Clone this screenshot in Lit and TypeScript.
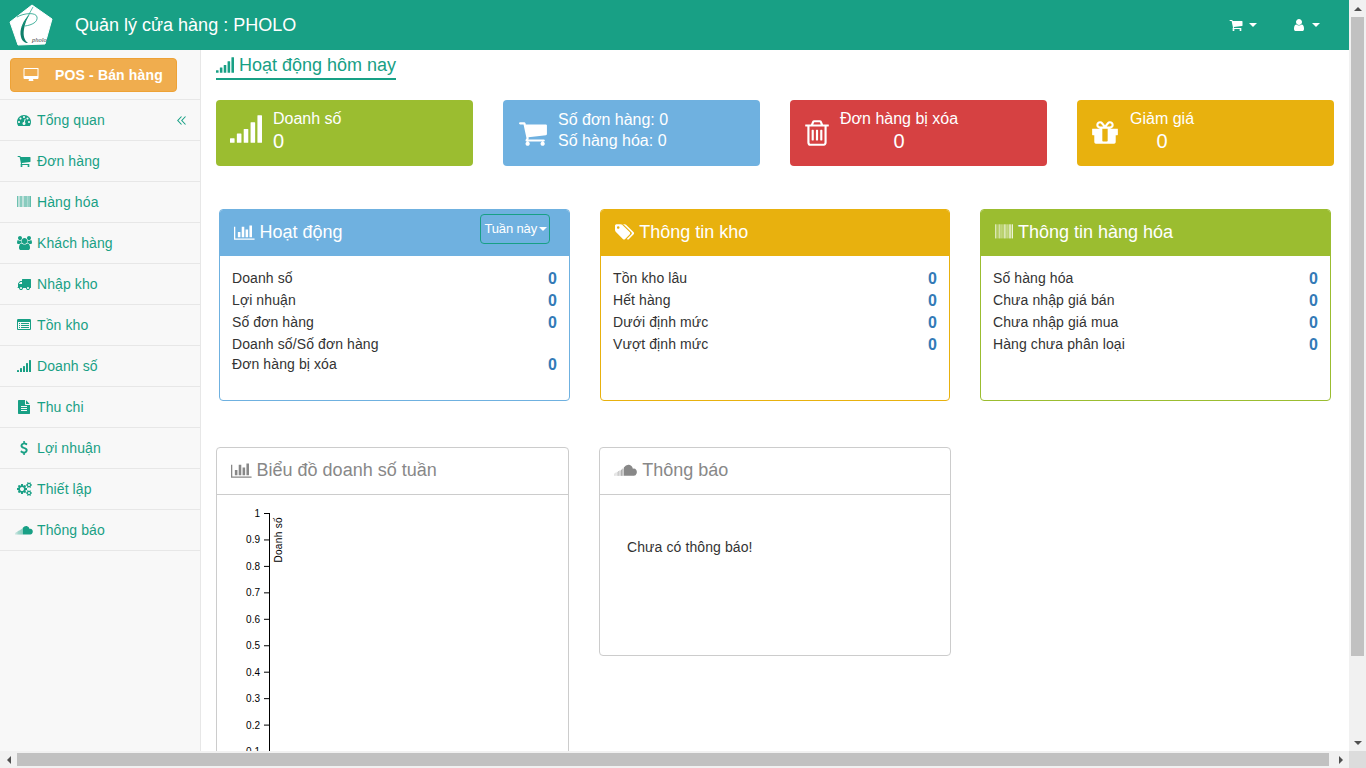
import { LitElement, html, css, svg } from 'lit';
import { customElement } from 'lit/decorators.js';

type IconDef = { w: number; body: ReturnType<typeof svg> };

const p = (d: string) => svg`<path d=${d}></path>`;

const barcodeBody = () => {
  const bars = [[0, 63], [94, 32], [190, 31], [317, 31], [443, 63], [570, 63], [696, 31], [823, 31], [918, 63], [1045, 63], [1171, 63], [1298, 31], [1393, 63], [1520, 63], [1647, 31], [1711, 81]];
  return svg`${bars.map(([x, w]) => svg`<rect x=${x} y="128" width=${w} height="1408"></rect>`)}`;
};

const signalBody = () => {
  const bars = [[0, 1408], [384, 1152], [768, 896], [1152, 512], [1536, 128]];
  return svg`${bars.map(([x, y]) => svg`<rect x=${x} y=${y} width="256" height=${1664 - y} rx="30"></rect>`)}`;
};

const icons: Record<string, IconDef> = {
  cart: { w: 1792, body: p('M704 1536q0 52-38 90t-90 38-90-38-38-90 38-90 90-38 90 38 38 90zm896 0q0 52-38 90t-90 38-90-38-38-90 38-90 90-38 90 38 38 90zm128-1088v512q0 24-16.5 42.5t-40.5 21.5l-1044 122q13 60 13 70 0 16-24 64h920q26 0 45 19t19 45-19 45-45 19h-1024q-26 0-45-19t-19-45q0-11 8-31.5t16-36 21.5-40 15.5-29.5l-177-823h-204q-26 0-45-19t-19-45 19-45 45-19h256q16 0 28.5 6.5t19.5 15.5 13 24.5 8 26 5.5 29.5 4.5 26h1201q26 0 45 19t19 45z') },
  user: { w: 1792, body: p('M1536 1399q0 109-62.5 187t-150.5 78h-854q-88 0-150.5-78t-62.5-187q0-85 8.5-160.5t31.5-152 58.5-131 94-89 134.5-34.5q131 128 313 128t313-128q76 0 134.5 34.5t94 89 58.5 131 31.5 152 8.5 160.5zm-256-887q0 159-112.5 271.5t-271.5 112.5-271.5-112.5-112.5-271.5 112.5-271.5 271.5-112.5 271.5 112.5 112.5 271.5z') },
  desktop: { w: 2048, body: p('M1856 992v-832q0-13-9.5-22.5t-22.5-9.5h-1600q-13 0-22.5 9.5t-9.5 22.5v832q0 13 9.5 22.5t22.5 9.5h1600q13 0 22.5-9.5t9.5-22.5zm128-832v1088q0 66-47 113t-113 47h-544q0 37 16 77.5t32 71 16 43.5q0 26-19 45t-45 19h-512q-26 0-45-19t-19-45q0-14 16-44t32-70 16-78h-544q-66 0-113-47t-47-113v-1088q0-66 47-113t113-47h1632q66 0 113 47t47 113z') },
  gauge: { w: 1792, body: p('M384 1152q0-53-37.5-90.5t-90.5-37.5-90.5 37.5-37.5 90.5 37.5 90.5 90.5 37.5 90.5-37.5 37.5-90.5zm192-448q0-53-37.5-90.5t-90.5-37.5-90.5 37.5-37.5 90.5 37.5 90.5 90.5 37.5 90.5-37.5 37.5-90.5zm428 481l101-382q6-26-7.5-48.5t-38.5-29.5-48 6.5-30 39.5l-101 382q-60 5-107 43.5t-63 98.5q-20 77 20 146t117 89 146-20 89-117q16-60-6-117t-72-91zm660-33q0-53-37.5-90.5t-90.5-37.5-90.5 37.5-37.5 90.5 37.5 90.5 90.5 37.5 90.5-37.5 37.5-90.5zm-640-640q0-53-37.5-90.5t-90.5-37.5-90.5 37.5-37.5 90.5 37.5 90.5 90.5 37.5 90.5-37.5 37.5-90.5zm448 192q0-53-37.5-90.5t-90.5-37.5-90.5 37.5-37.5 90.5 37.5 90.5 90.5 37.5 90.5-37.5 37.5-90.5zm320 448q0 261-141 483-19 29-54 29h-1402q-35 0-54-29-141-221-141-483 0-182 71-348t191-286 286-191 348-71 348 71 286 191 191 286 71 348z') },
  barcode: { w: 1792, body: barcodeBody() },
  users: { w: 1920, body: p('M593 896q-162 5-265 128h-134q-82 0-138-40.5t-56-118.5q0-353 124-353 6 0 43.5 21t97.5 42.5 119 21.5q67 0 133-23-5 37-5 66 0 139 81 256zm1071 637q0 120-73 189.5t-194 69.5h-874q-121 0-194-69.5t-73-189.5q0-53 3.5-103.5t14-109 26.5-108.5 43-97.5 62-81 85.5-53.5 111.5-20q10 0 43 21.5t73 48 107 48 135 21.5 135-21.5 107-48 73-48 43-21.5q61 0 111.5 20t85.5 53.5 62 81 43 97.5 26.5 108.5 14 109 3.5 103.5zm-1024-1277q0 106-75 181t-181 75-181-75-75-181 75-181 181-75 181 75 75 181zm704 384q0 159-112.5 271.5t-271.5 112.5-271.5-112.5-112.5-271.5 112.5-271.5 271.5-112.5 271.5 112.5 112.5 271.5zm576 225q0 78-56 118.5t-138 40.5h-134q-103-123-265-128 81-117 81-256 0-29-5-66 66 23 133 23 59 0 119-21.5t97.5-42.5 43.5-21q124 0 124 353zm-128-609q0 106-75 181t-181 75-181-75-75-181 75-181 181-75 181 75 75 181z') },
  truck: { w: 1792, body: p('M640 1408q0-52-38-90t-90-38-90 38-38 90 38 90 90 38 90-38 38-90zm-384-512h384v-256h-158q-13 0-22 9l-195 195q-9 9-9 22v30zm1280 512q0-52-38-90t-90-38-90 38-38 90 38 90 90 38 90-38 38-90zm256-1088v1024q0 15-4 26.5t-13.5 18.5-16.5 11.5-23.5 6-22.5 2-25.5 0-22.5-.5q0 106-75 181t-181 75-181-75-75-181h-384q0 106-75 181t-181 75-181-75-75-181h-64q-3 0-22.5.5t-25.5 0-22.5-2-23.5-6-16.5-11.5-13.5-18.5-4-26.5q0-26 19-45t45-19v-320q0-8-.5-35t0-38 2.5-34.5 6.5-37 14-30.5 22.5-30l198-198q19-19 50.5-32t58.5-13h160v-192q0-26 19-45t45-19h1024q26 0 45 19t19 45z') },
  list: { w: 1792, body: p('M384 1184v64q0 13-9.5 22.5t-22.5 9.5h-64q-13 0-22.5-9.5t-9.5-22.5v-64q0-13 9.5-22.5t22.5-9.5h64q13 0 22.5 9.5t9.5 22.5zm0-256v64q0 13-9.5 22.5t-22.5 9.5h-64q-13 0-22.5-9.5t-9.5-22.5v-64q0-13 9.5-22.5t22.5-9.5h64q13 0 22.5 9.5t9.5 22.5zm0-256v64q0 13-9.5 22.5t-22.5 9.5h-64q-13 0-22.5-9.5t-9.5-22.5v-64q0-13 9.5-22.5t22.5-9.5h64q13 0 22.5 9.5t9.5 22.5zm1152 512v64q0 13-9.5 22.5t-22.5 9.5h-960q-13 0-22.5-9.5t-9.5-22.5v-64q0-13 9.5-22.5t22.5-9.5h960q13 0 22.5 9.5t9.5 22.5zm0-256v64q0 13-9.5 22.5t-22.5 9.5h-960q-13 0-22.5-9.5t-9.5-22.5v-64q0-13 9.5-22.5t22.5-9.5h960q13 0 22.5 9.5t9.5 22.5zm0-256v64q0 13-9.5 22.5t-22.5 9.5h-960q-13 0-22.5-9.5t-9.5-22.5v-64q0-13 9.5-22.5t22.5-9.5h960q13 0 22.5 9.5t9.5 22.5zm128 704v-832q0-13-9.5-22.5t-22.5-9.5h-1472q-13 0-22.5 9.5t-9.5 22.5v832q0 13 9.5 22.5t22.5 9.5h1472q13 0 22.5-9.5t9.5-22.5zm128-1088v1088q0 66-47 113t-113 47h-1472q-66 0-113-47t-47-113v-1088q0-66 47-113t113-47h1472q66 0 113 47t47 113z') },
  signal: { w: 1792, body: signalBody() },
  file: { w: 1792, body: p('M1596 476q14 14 28 36h-472v-472q22 14 36 28zm-476 164h544v1056q0 40-28 68t-68 28h-1344q-40 0-68-28t-28-68v-1600q0-40 28-68t68-28h800v544q0 40 28 68t68 28zm160 736v-64q0-14-9-23t-23-9h-704q-14 0-23 9t-9 23v64q0 14 9 23t23 9h704q14 0 23-9t9-23zm0-256v-64q0-14-9-23t-23-9h-704q-14 0-23 9t-9 23v64q0 14 9 23t23 9h704q14 0 23-9t9-23zm0-256v-64q0-14-9-23t-23-9h-704q-14 0-23 9t-9 23v64q0 14 9 23t23 9h704q14 0 23-9t9-23z') },
  dollar: { w: 1024, body: p('M978 1185q0 153-99.500 263.500t-258.500 136.500v175q0 14-9 23t-23 9h-135q-13 0-22.500-9.500t-9.500-22.500v-175q-66-9-127.500-31t-101.500-44.500-74-48-46.500-37.500-17.500-18q-17-21-2-41l103-135q7-10 23-12 15-2 24 9l2 2q113 99 243 125 37 8 74 8 81 0 142.500-43t61.500-122q0-28-15-53t-33.500-42-58.500-37.500-66-32-80-32.500q-39-16-61.500-25t-61.500-26.500-62.500-31-56.500-35.500-53.500-42.500-43.500-49-35.500-58-21-66.500-8.500-78q0-138 98-242t255-134v-180q0-13 9.500-22.500t22.500-9.500h135q14 0 23 9t9 23v176q57 6 110.500 23t87 33.500 63.500 37.500 39 29 15 14q17 18 5 38l-81 146q-8 15-23 16-14 3-27-7-3-3-14.500-12t-39-26.500-58.500-32-74.500-26-85.500-11.500q-95 0-155 43t-60 111q0 26 8.500 48t29.500 41.500 39.500 33 56 31 60.500 27 70 27.500q53 20 81 31.500t76 35 75.500 42.500 62 50 53 63.500 31.500 76.500 13 94z') },
  cogs: { w: 1920, body: p('M896 896q0-106-75-181t-181-75-181 75-75 181 75 181 181 75 181-75 75-181zm768 512q0-52-38-90t-90-38-90 38-38 90q0 53 37.500 90.500t90.500 37.500 90.500-37.500 37.500-90.500zm0-1024q0-52-38-90t-90-38-90 38-38 90q0 53 37.500 90.500t90.500 37.500 90.500-37.500 37.500-90.500zm-384 421v185q0 10-7 19.500t-16 10.500l-155 24q-11 35-32 76 34 48 90 115 7 11 7 20 0 12-7 19-23 30-82.500 89.500t-78.500 59.500q-11 0-21-7l-115-90q-37 19-77 31-11 108-23 155-7 24-30 24h-186q-11 0-20-7.500t-10-17.500l-23-153q-34-10-75-31l-118 89q-7 7-20 7-11 0-21-8-144-133-144-160 0-9 7-19 10-14 41-53t47-61q-23-44-35-82l-152-24q-10-1-17-9.500t-7-19.500v-185q0-10 7-19.500t16-10.500l155-24q11-35 32-76-34-48-90-115-7-11-7-20 0-12 7-20 22-30 82-89t79-59q11 0 21 7l115 90q34-18 77-32 11-108 23-154 7-24 30-24h186q11 0 20 7.500t10 17.500l23 153q34 10 75 31l118-89q8-7 20-7 11 0 21 8 144 133 144 160 0 8-7 19-12 16-42 54t-45 60q23 48 34 82l152 23q10 2 17 10.500t7 19.500zm640 533v140q0 16-149 31-12 27-30 52 51 113 51 138 0 4-4 7-122 71-124 71-8 0-46-47t-52-68q-20 2-30 2t-30-2q-14 21-52 68t-46 47q-2 0-124-71-4-3-4-7 0-25 51-138-18-25-30-52-149-15-149-31v-140q0-16 149-31 13-29 30-52-51-113-51-138 0-4 4-7 4-2 35-20t59-34 30-16q8 0 46 46.500t52 67.500q20-2 30-2t30 2q51-71 92-112l6-2q4 0 124 70 4 3 4 7 0 25-51 138 17 23 30 52 149 15 149 31zm0-1024v140q0 16-149 31-12 27-30 52 51 113 51 138 0 4-4 7-122 71-124 71-8 0-46-47t-52-68q-20 2-30 2t-30-2q-14 21-52 68t-46 47q-2 0-124-71-4-3-4-7 0-25 51-138-18-25-30-52-149-15-149-31v-140q0-16 149-31 13-29 30-52-51-113-51-138 0-4 4-7 4-2 35-20t59-34 30-16q8 0 46 46.500t52 67.500q20-2 30-2t30 2q51-71 92-112l6-2q4 0 124 70 4 3 4 7 0 25-51 138 17 23 30 52 149 15 149 31z') },
  cloud: {
    w: 2304,
    body: svg`
      <rect x="0" y="1240" width="90" height="240" opacity=".25"></rect>
      <rect x="140" y="1160" width="90" height="320" opacity=".35"></rect>
      <rect x="280" y="1080" width="90" height="400" opacity=".45"></rect>
      <rect x="420" y="1000" width="90" height="480" opacity=".55"></rect>
      <rect x="560" y="940" width="90" height="540" opacity=".65"></rect>
      <rect x="700" y="860" width="90" height="620" opacity=".75"></rect>
      <rect x="840" y="760" width="90" height="720" opacity=".85"></rect>
      <path d="M980 1480V640Q1200 340 1500 380 1780 420 1880 760 2080 700 2200 860 2320 1020 2250 1240 2180 1460 1980 1480Z"></path>`,
  },
  trash: { w: 1792, body: p('M704 736v576q0 14-9 23t-23 9h-64q-14 0-23-9t-9-23v-576q0-14 9-23t23-9h64q14 0 23 9t9 23zm256 0v576q0 14-9 23t-23 9h-64q-14 0-23-9t-9-23v-576q0-14 9-23t23-9h64q14 0 23 9t9 23zm256 0v576q0 14-9 23t-23 9h-64q-14 0-23-9t-9-23v-576q0-14 9-23t23-9h64q14 0 23 9t9 23zm128 724v-948h-896v948q0 22 7 40.500t14.500 27 10.500 8.500h832q3 0 10.500-8.500t14.500-27 7-40.500zm-672-1076h448l-48-117q-7-9-17-11h-317q-10 2-17 11zm928 32v64q0 14-9 23t-23 9h-96v948q0 83-47 143.500t-113 60.500h-832q-66 0-113-58.500t-47-141.500v-952h-96q-14 0-23-9t-9-23v-64q0-14 9-23t23-9h309l70-167q15-37 54-63t79-26h320q40 0 79 26t54 63l70 167h309q14 0 23 9t9 23z') },
  gift: { w: 1792, body: p('M1056 1356v-716h-320v716q0 25 18 38.500t46 13.500h192q28 0 46-13.500t18-38.500zm-456-844h195l-126-161q-26-31-69-31-40 0-68 28t-28 68 28 68 68 28zm688-96q0-40-28-68t-68-28q-43 0-69 31l-125 161h194q40 0 68-28t28-68zm376 256v320q0 14-9 23t-23 9h-96v416q0 40-28 68t-68 28h-1088q-40 0-68-28t-28-68v-416h-96q-14 0-23-9t-9-23v-320q0-14 9-23t23-9h440q-93 0-158.500-65.500t-65.500-158.500 65.500-158.500 158.500-65.500q107 0 168 77l128 165 128-165q61-77 168-77 93 0 158.500 65.500t65.500 158.500-65.500 158.500-158.500 65.500h440q14 0 23 9t9 23z') },
  tags: { w: 1920, body: p('M448 448q0-53-37.500-90.500t-90.500-37.500-90.500 37.500-37.500 90.500 37.500 90.500 90.500 37.500 90.500-37.500 37.500-90.500zm1067 576q0 53-37 90l-491 492q-39 37-91 37-53 0-90-37l-715-716q-38-37-64.500-101t-26.500-117v-416q0-52 38-90t90-38h416q53 0 117 26.500t102 64.500l715 714q37 39 37 91zm384 0q0 53-37 90l-491 492q-39 37-91 37-36 0-59-14t-53-45l470-470q37-37 37-90 0-52-37-91l-715-714q-38-38-102-64.500t-117-26.500h224q53 0 117 26.500t102 64.500l715 714q37 39 37 91z') },
  chart: { w: 2048, body: p('M640 896v512h-256v-512h256zm384-512v1024h-256v-1024h256zm1024 1152v128h-2048v-1280h128v1152h1920zm-640-896v768h-256v-768h256zm384-384v1152h-256v-1152h256z') },
};

const icon = (name: string, size: number) => {
  const def = icons[name];
  return html`<svg class="ic" viewBox="0 0 ${def.w} 1792" width=${(size * def.w) / 1792} height=${size} fill="currentColor">${def.body}</svg>`;
};

const menu = [
  ['gauge', 'Tổng quan'],
  ['cart', 'Đơn hàng'],
  ['barcode', 'Hàng hóa'],
  ['users', 'Khách hàng'],
  ['truck', 'Nhập kho'],
  ['list', 'Tồn kho'],
  ['signal', 'Doanh số'],
  ['file', 'Thu chi'],
  ['dollar', 'Lợi nhuận'],
  ['cogs', 'Thiết lập'],
  ['cloud', 'Thông báo'],
];

const panels = [
  {
    cls: 'blue', ic: 'chart', title: 'Hoạt động', btn: true,
    rows: [['Doanh số', '0'], ['Lợi nhuận', '0'], ['Số đơn hàng', '0'], ['Doanh số/Số đơn hàng', ''], ['Đơn hàng bị xóa', '0']],
  },
  {
    cls: 'yellow', ic: 'tags', title: 'Thông tin kho', btn: false,
    rows: [['Tồn kho lâu', '0'], ['Hết hàng', '0'], ['Dưới định mức', '0'], ['Vượt định mức', '0']],
  },
  {
    cls: 'green', ic: 'barcode', title: 'Thông tin hàng hóa', btn: false,
    rows: [['Số hàng hóa', '0'], ['Chưa nhập giá bán', '0'], ['Chưa nhập giá mua', '0'], ['Hàng chưa phân loại', '0']],
  },
];

const ticks = ['1', '0.9', '0.8', '0.7', '0.6', '0.5', '0.4', '0.3', '0.2', '0.1'];

@customElement('app-root')
export class AppRoot extends LitElement {
  static styles = css`
    :host {
      display: grid;
      grid-template-columns: 1349px 17px;
      grid-template-rows: 751px 17px;
      width: 1366px;
      height: 768px;
      overflow: hidden;
      font-family: 'Liberation Sans', Arial, sans-serif;
      font-size: 14px;
      line-height: 20px;
      color: #333;
      background: #fff;
    }
    .ic { display: block; flex: none; }
    .page { display: flex; flex-direction: column; overflow: hidden; }

    .topbar { display: flex; align-items: center; flex: none; height: 50px; background: #18a085; color: #fff; }
    .logo { display: block; margin-left: 8px; flex: none; }
    .brand { margin-left: 21px; font-size: 18px; }
    .tools { display: flex; align-items: center; margin-left: auto; padding-right: 29px; }
    .tool { display: flex; align-items: center; gap: 6px; margin-left: 35px; }
    .caret { width: 0; height: 0; border-left: 4.5px solid transparent; border-right: 4.5px solid transparent; border-top: 4.5px solid currentColor; }

    .body { display: flex; flex: 1; min-height: 0; }
    .side { flex: none; width: 200px; background: #f8f8f8; border-right: 1px solid #e7e7e7; color: #18a085; letter-spacing: .1px; }
    .pos-wrap { height: 50px; padding: 8px 0 0 10px; box-sizing: border-box; border-bottom: 1px solid #e7e7e7; }
    .pos {
      display: flex; align-items: center; box-sizing: border-box; width: 167px; height: 34px; padding-left: 12px;
      background: #f0ad4e; border: 1px solid #eea236; border-radius: 4px; color: #fff; font-weight: bold; letter-spacing: .15px;
    }
    .pos span { margin-left: 16px; }
    .item { display: flex; align-items: center; box-sizing: border-box; height: 41px; padding-left: 15px; border-bottom: 1px solid #e7e7e7; }
    .item .ibox { display: flex; justify-content: center; width: 18px; margin-right: 4px; }
    .collapse { margin-left: auto; margin-right: 14px; }

    .main { flex: 1; min-width: 0; padding: 5px 0 0 15px; overflow: hidden; }
    .title {
      display: inline-flex; align-items: center; gap: 5px; box-sizing: border-box; width: 180px; height: 25px;
      border-bottom: 2px solid #18a085; color: #18a085; font-size: 18px; padding-bottom: 4px; white-space: nowrap;
    }
    .stats { display: flex; gap: 30px; margin-top: 20px; }
    .stat { display: flex; align-items: center; box-sizing: border-box; width: 257px; height: 66px; border-radius: 4px; color: #fff; font-size: 16px; line-height: 21px; }
    .stat .val { font-size: 20px; line-height: 24px; }
    .centered { text-align: center; }
    .stat .txt { margin-top: -5px; }
    .stat .sig { margin-top: -9px; }
    .s1 { padding-left: 14px; gap: 11px; }
    .s2 { padding-left: 15px; gap: 10px; }
    .s2 .txt { margin-top: -7px; }
    .s3 { padding-left: 12px; gap: 8px; }
    .s4 { padding-left: 13px; gap: 10px; }

    .green { --c: #9bbd30; }
    .blue { --c: #6fb1e0; }
    .red { --c: #d64142; }
    .yellow { --c: #e8b10e; }
    .stat.green, .stat.blue, .stat.red, .stat.yellow { background: var(--c); }

    .panels { display: grid; grid-template-columns: 351px 350px 351px; gap: 30px; margin: 43px 0 0 3px; width: 1112px; }
    .panel { box-sizing: border-box; height: 192px; border: 1px solid var(--c); border-radius: 4px; overflow: hidden; }
    .phead { display: flex; align-items: center; box-sizing: border-box; height: 46px; padding: 0 19px 2px 14px; background: var(--c); color: #fff; font-size: 18px; gap: 5px; }
    .phead .ptitle { flex: 1; }
    .btn {
      display: flex; align-items: center; gap: 2px; align-self: flex-start; box-sizing: border-box; height: 30px; margin-top: 4px; padding: 0 2px 0 3px;
      border: 1px solid #18a085; border-radius: 4px; font-size: 13px; letter-spacing: -.15px;
    }
    .btn .caret { border-width: 4px 4px 0; }
    .pbody { padding: 11px 12px 0; letter-spacing: .1px; }
    .row { display: flex; justify-content: space-between; }
    .row b { color: #337ab7; font-size: 16px; line-height: 24px; margin-bottom: -2px; }
    .row span { line-height: 22px; }
    .row.short { height: 20px; }

    .lower { display: flex; gap: 30px; margin-top: 46px; align-items: flex-start; }
    .card { box-sizing: border-box; border: 1px solid #ccc; border-radius: 4px; }
    .chart-card { width: 353px; height: 420px; }
    .note-card { width: 352px; height: 209px; }
    .chead { display: flex; align-items: center; gap: 5px; box-sizing: border-box; height: 47px; padding: 0 0 2px 14px; border-bottom: 1px solid #ccc; color: #888; font-size: 18px; }
    .note { padding: 42px 0 0 27px; letter-spacing: .1px; }
    .plot { display: block; }
    .plot text { font-family: 'Liberation Sans', Arial, sans-serif; font-size: 10px; fill: #000; }
    .plot .axis-label { letter-spacing: .35px; }

    .vbar, .hbar { background: #f1f1f1; display: flex; }
    .vbar { flex-direction: column; align-items: center; }
    .arrow { display: flex; align-items: center; justify-content: center; flex: none; width: 17px; height: 17px; }
    .arrow i { display: block; width: 0; height: 0; }
    .up { border-left: 4px solid transparent; border-right: 4px solid transparent; border-bottom: 4px solid #505050; }
    .down { border-left: 4px solid transparent; border-right: 4px solid transparent; border-top: 4px solid #505050; }
    .left { border-top: 4px solid transparent; border-bottom: 4px solid transparent; border-right: 4px solid #505050; }
    .right { border-top: 4px solid transparent; border-bottom: 4px solid transparent; border-left: 4px solid #505050; }
    .vthumb { width: 13px; height: 639px; background: #c1c1c1; flex: none; }
    .hbar { align-items: center; }
    .hthumb { width: 1312px; height: 13px; background: #c1c1c1; flex: none; }
    .end { margin-top: auto; }
    .endh { margin-left: auto; }
    .corner { background: #dcdcdc; }
  `;

  private renderPlot() {
    const pitch = 26.45;
    return html`<svg class="plot" width="351" height="371" viewBox="0 0 351 371">
      <line x1="52.500" y1="18" x2="52.500" y2="371" stroke="#000"></line>
      ${ticks.map((t, i) => {
        const y = 18.5 + i * pitch;
        return svg`<line x1="47" y1=${y} x2="52" y2=${y} stroke="#000"></line>
          <text x="43" y=${y + 3.5} text-anchor="end">${t}</text>`;
      })}
      <text class="axis-label" transform="translate(65 22) rotate(-90)" text-anchor="end">Doanh số</text>
    </svg>`;
  }

  render() {
    return html`
      <div class="page">
        <header class="topbar">
          <svg class="logo" width="46" height="46" viewBox="0 0 46 46">
            <path d="M24 3 L44 17 L37 42 L10 43 L2 20 Z" fill="#fff" stroke="#fff" stroke-linejoin="round"></path>
            <path d="M22 12 C15 18 11 28 13 35 C14 39 17 41 20 41 C16 38 15 33 16 27 C17 21 19 16 22 12 Z" fill="#0f7f6a"></path>
            <path d="M9 15 C16 11 28 10 29 15 C30 20 24 23 17 24" fill="none" stroke="#18a085" stroke-width=".8"></path>
            <path d="M25 5 L14 25" fill="none" stroke="#18a085" stroke-width=".7"></path>
            <text x="24" y="40" font-family="Liberation Serif" font-style="italic" font-size="6.500" fill="#444">pholo</text>
          </svg>
          <div class="brand">Quản lý cửa hàng : PHOLO</div>
          <div class="tools">
            <div class="tool">${icon('cart', 14)}<i class="caret"></i></div>
            <div class="tool">${icon('user', 14)}<i class="caret"></i></div>
          </div>
        </header>
        <div class="body">
          <nav class="side">
            <div class="pos-wrap">
              <div class="pos">${icon('desktop', 14)}<span>POS - Bán hàng</span></div>
            </div>
            ${menu.map(([ic, label], i) => html`
              <div class="item">
                <div class="ibox">${icon(ic, 14)}</div>${label}
                ${i === 0 ? html`<svg class="collapse" width="9" height="9" viewBox="0 0 9 9" fill="none" stroke="currentColor" stroke-width="1.100"><path d="M4.500 .5 L.8 4.500 L4.500 8.500 M8.500 .5 L4.800 4.500 L8.500 8.500"></path></svg>` : ''}
              </div>`)}
          </nav>
          <main class="main">
            <div class="title">${icon('signal', 18)}<span>Hoạt động hôm nay</span></div>
            <div class="stats">
              <div class="stat green s1">
                <div class="sig">${icon('signal', 32)}</div>
                <div class="txt"><div>Doanh số</div><div class="val">0</div></div>
              </div>
              <div class="stat blue s2">
                ${icon('cart', 30)}
                <div class="txt"><div>Số đơn hàng: 0</div><div>Số hàng hóa: 0</div></div>
              </div>
              <div class="stat red s3">
                ${icon('trash', 30)}
                <div class="txt centered"><div>Đơn hàng bị xóa</div><div class="val">0</div></div>
              </div>
              <div class="stat yellow s4">
                ${icon('gift', 30)}
                <div class="txt centered"><div>Giảm giá</div><div class="val">0</div></div>
              </div>
            </div>
            <div class="panels">
              ${panels.map((pn) => html`
                <section class="panel ${pn.cls}">
                  <div class="phead">
                    ${icon(pn.ic, 18)}
                    <div class="ptitle">${pn.title}</div>
                    ${pn.btn ? html`<div class="btn">Tuần này<i class="caret"></i></div>` : ''}
                  </div>
                  <div class="pbody">
                    ${pn.rows.map(([k, v]) => html`
                      <div class="row ${v ? '' : 'short'}"><span>${k}</span>${v ? html`<b>${v}</b>` : ''}</div>`)}
                  </div>
                </section>`)}
            </div>
            <div class="lower">
              <section class="card chart-card">
                <div class="chead">${icon('chart', 18)}<span>Biểu đồ doanh số tuần</span></div>
                ${this.renderPlot()}
              </section>
              <section class="card note-card">
                <div class="chead">${icon('cloud', 18)}<span>Thông báo</span></div>
                <div class="note">Chưa có thông báo!</div>
              </section>
            </div>
          </main>
        </div>
      </div>
      <div class="vbar">
        <div class="arrow"><i class="up"></i></div>
        <div class="vthumb"></div>
        <div class="arrow end"><i class="down"></i></div>
      </div>
      <div class="hbar">
        <div class="arrow"><i class="left"></i></div>
        <div class="hthumb"></div>
        <div class="arrow endh"><i class="right"></i></div>
      </div>
      <div class="corner"></div>
    `;
  }
}
